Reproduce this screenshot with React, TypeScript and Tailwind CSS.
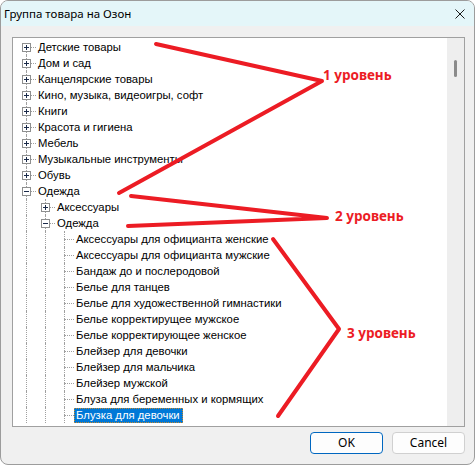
import React from "react";

type Kind = "plus" | "minus" | "leaf";

interface node {
  label: string;
  level: number;
  kind: Kind;
  selected?: boolean;
}

const items: node[] = [
  { label: "Детские товары", level: 1, kind: "plus" },
  { label: "Дом и сад", level: 1, kind: "plus" },
  { label: "Канцелярские товары", level: 1, kind: "plus" },
  { label: "Кино, музыка, видеоигры, софт", level: 1, kind: "plus" },
  { label: "Книги", level: 1, kind: "plus" },
  { label: "Красота и гигиена", level: 1, kind: "plus" },
  { label: "Мебель", level: 1, kind: "plus" },
  { label: "Музыкальные инструменты", level: 1, kind: "plus" },
  { label: "Обувь", level: 1, kind: "plus" },
  { label: "Одежда", level: 1, kind: "minus" },
  { label: "Аксессуары", level: 2, kind: "plus" },
  { label: "Одежда", level: 2, kind: "minus" },
  { label: "Аксессуары для официанта женские", level: 3, kind: "leaf" },
  { label: "Аксессуары для официанта мужские", level: 3, kind: "leaf" },
  { label: "Бандаж до и послеродовой", level: 3, kind: "leaf" },
  { label: "Белье для танцев", level: 3, kind: "leaf" },
  { label: "Белье для художественной гимнастики", level: 3, kind: "leaf" },
  { label: "Белье корректирущее мужское", level: 3, kind: "leaf" },
  { label: "Белье корректирующее женское", level: 3, kind: "leaf" },
  { label: "Блейзер для девочки", level: 3, kind: "leaf" },
  { label: "Блейзер для мальчика", level: 3, kind: "leaf" },
  { label: "Блейзер мужской", level: 3, kind: "leaf" },
  { label: "Блуза для беременных и кормящих", level: 3, kind: "leaf" },
  { label: "Блузка для девочки", level: 3, kind: "leaf", selected: true },
];

// little +/- box of the classic tree view
const ExpandBox = ({ open }: { open: boolean }) => (
  <svg width="9" height="9" viewBox="0 0 9 9" className="absolute left-[6px] top-[4px]">
    <rect x="0.5" y="0.5" width="8" height="8" fill="#fff" stroke="#8e8f8f" />
    <line x1="2" y1="4.5" x2="7" y2="4.5" stroke="#1b2b4a" />
    {!open && <line x1="4.5" y1="2" x2="4.5" y2="7" stroke="#1b2b4a" />}
  </svg>
);

const TreeRow = ({ item, first }: { item: node; first: boolean }) => {
  const guides = Array.from({ length: item.level - 1 });
  return (
    <div className="flex h-4 items-center">
      {guides.map((_, i) => (
        <div key={i} className="relative h-4 w-[19px] shrink-0">
          <div className="absolute left-[10px] top-0 bottom-0 border-l border-dotted border-[#a0a0a0]" />
        </div>
      ))}
      <div className="relative h-4 w-[19px] shrink-0">
        <div
          className={`absolute left-[10px] bottom-0 border-l border-dotted border-[#a0a0a0] ${
            first ? "top-[8px]" : "top-0"
          }`}
        />
        <div className="absolute left-[10px] -right-[1px] top-[8px] border-t border-dotted border-[#a0a0a0]" />
        {item.kind !== "leaf" && <ExpandBox open={item.kind === "minus"} />}
      </div>
      <span
        className={`ml-[1px] h-[15px] whitespace-nowrap border pl-[1px] pr-[2px] leading-[13px] ${
          item.selected
            ? "border-dotted border-[#c9882d] bg-[#0078d7] text-white"
            : "border-transparent text-black"
        }`}
      >
        {item.label}
      </span>
    </div>
  );
};

const Annotations = () => (
  <>
    <svg
      width="476"
      height="466"
      className="pointer-events-none absolute left-0 top-0"
      fill="none"
      stroke="#ec1c24"
      strokeWidth="4"
      strokeLinecap="round"
      strokeLinejoin="round"
    >
      <polyline points="155,43 321,80 118,192" />
      <polyline points="130,195 326,217 127,225" />
      <polyline points="272,238 338,328 277,415" />
    </svg>
    <div className="pointer-events-none absolute left-[322px] top-[66px] text-[13.5px] font-bold leading-4 text-[#ec1c24]">
      1 уровень
    </div>
    <div className="pointer-events-none absolute left-[334px] top-[207px] text-[13.5px] font-bold leading-4 text-[#ec1c24]">
      2 уровень
    </div>
    <div className="pointer-events-none absolute left-[346px] top-[324px] text-[13.5px] font-bold leading-4 text-[#ec1c24]">
      3 уровень
    </div>
  </>
);

export default function App() {
  return (
    <div className="h-[466px] w-[476px] bg-white font-['Noto_Sans',sans-serif]">
      <div className="relative flex h-[465px] w-[475px] flex-col overflow-hidden rounded-[8px] border border-[#9c9c9c] bg-[#f0f0f0]">
        {/* title bar */}
        <div className="flex h-[25px] shrink-0 items-center justify-between bg-[#e4f6f9] pl-[3px] pr-[9px]">
          <span className="text-[11.5px] text-black">Группа товара на Озон</span>
          <svg width="10" height="10" viewBox="0 0 10 10" stroke="#1a1a1a" strokeWidth="1">
            <line x1="0.5" y1="0.5" x2="9.5" y2="9.5" />
            <line x1="9.5" y1="0.5" x2="0.5" y2="9.5" />
          </svg>
        </div>

        <div className="flex flex-col pl-[11px] pt-[11px]">
          {/* tree view */}
          <div className="flex h-[390px] w-[453px] border border-[#a0a0a0] bg-white">
            <div className="flex-1 overflow-hidden pl-[3px] pt-[1px] font-['Liberation_Sans',sans-serif] text-[11.3px]">
              {items.map((item, i) => (
                <TreeRow key={i} item={item} first={i === 0} />
              ))}
            </div>
            <div className="flex w-[17px] justify-center bg-[#eeeeee] pt-[22px]">
              <div className="h-[17px] w-[3px] rounded-full bg-[#8a8a8a]" />
            </div>
          </div>

          {/* buttons */}
          <div className="mt-[5px] flex w-[453px] justify-end gap-[9px]">
            <button className="h-[22px] w-[73px] rounded-[4px] border border-[#0067c0] bg-[#fdfdfd] text-[12px] text-black">
              OK
            </button>
            <button className="h-[22px] w-[73px] rounded-[4px] border border-[#d0d0d0] bg-[#fdfdfd] text-[12px] text-black">
              Cancel
            </button>
          </div>
        </div>

        <Annotations />
      </div>
    </div>
  );
}
